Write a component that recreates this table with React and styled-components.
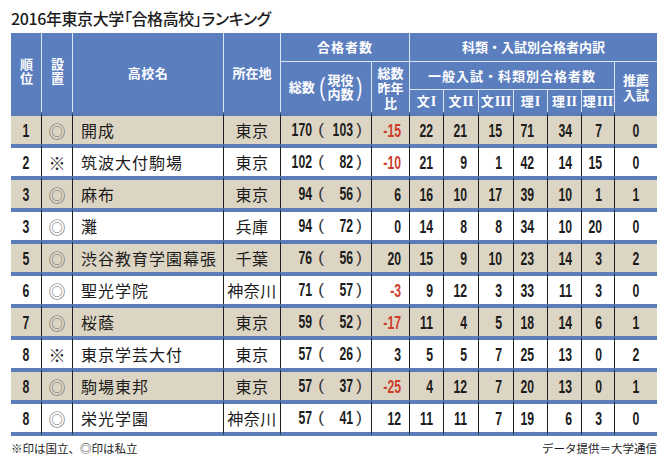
import React from 'react';
import styled, { createGlobalStyle } from 'styled-components';

const BLUE = '#5b7ebf';
const RULE = '#5a7cb9';
const SHADE = '#ddd5c3';
const HEAD_LINE = '#dde5f2';
const NUM = '"Liberation Sans", "DejaVu Sans", sans-serif';
const JP = '"Noto Sans CJK JP", "Noto Sans", sans-serif';

const GlobalStyle = createGlobalStyle`
  html, body {
    margin: 0;
    padding: 0;
    background: #fff;
  }
  body {
    font-family: ${JP};
    color: #1c1c1c;
  }
`;

const Page = styled.div`
  width: 670px;
  height: 469px;
  box-sizing: border-box;
  padding: 8px 13px 0 11px;
`;

const Title = styled.h1`
  margin: 0 0 5px;
  font-size: 16px;
  font-weight: 500;
  line-height: 20px;
  letter-spacing: -0.4px;
  font-feature-settings: "palt";
`;

const Table = styled.table`
  width: 646px;
  table-layout: fixed;
  border-collapse: separate;
  border-spacing: 0;
`;

const HeadRow = styled.tr`
  height: ${(p) => p.$h}px;
`;

const Th = styled.th`
  background: ${BLUE};
  color: #fff;
  font-size: 13px;
  font-weight: 700;
  line-height: 14px;
  padding: 0;
  text-align: center;
  vertical-align: middle;
  border-left: 1px solid ${HEAD_LINE};
  border-top: 1px solid ${HEAD_LINE};
  letter-spacing: ${(p) => p.$spacing || 0}px;
  tr:first-child > & {
    border-top: none;
  }
  tr:first-child > &:first-child {
    border-left: none;
  }
`;

const Vertical = styled.span`
  display: inline-block;
  writing-mode: vertical-rl;
  text-orientation: upright;
  letter-spacing: 1px;
  line-height: 14px;
`;

const Lines = styled.div`
  display: flex;
  flex-direction: column;
  align-items: center;
`;

const Line = styled.div`
  height: ${(p) => p.$h || 14}px;
  line-height: ${(p) => p.$h || 14}px;
  white-space: nowrap;
`;

const TotalHead = styled.div`
  display: flex;
  align-items: center;
  justify-content: center;
`;

const BigParen = styled.span`
  display: inline-block;
  margin: 0 1px 0 3px;
  font-family: "Liberation Sans", sans-serif;
  font-weight: 400;
  font-size: 26px;
  line-height: 28px;
  transform: scaleX(0.7);
  &:last-child {
    margin: 0 0 0 1px;
  }
`;

const Roman = styled.span`
  font-family: "Liberation Serif", serif;
  font-weight: 700;
  font-size: 14px;
  margin-left: 1px;
`;

const BodyRow = styled.tr`
  height: 32px;
  background: ${(p) => (p.$shaded ? SHADE : '#fff')};
  &:last-child {
    height: 36px;
  }
`;

const Td = styled.td`
  padding: 0 ${(p) => (p.$pad != null ? p.$pad : 10)}px 0 ${(p) => p.$padLeft || 0}px;
  border-top: 4px solid ${RULE};
  border-left: 1px solid #1e1e1e;
  text-align: ${(p) => p.$align || 'right'};
  vertical-align: middle;
  white-space: nowrap;
  overflow: hidden;
  &:first-child {
    border-left: none;
  }
  tr:last-child > & {
    border-bottom: 4px solid ${RULE};
  }
`;

// condensed bold digits: Liberation Sans squeezed horizontally
const Num = styled.span`
  display: inline-block;
  font-family: ${NUM};
  font-weight: 700;
  font-size: 18px;
  line-height: 22px;
  transform: scaleX(0.68);
  transform-origin: ${(p) => p.$origin || 'right'} center;
  color: ${(p) => (p.$neg ? '#cc3f2e' : '#1c1c1c')};
`;

const Mark = styled.span`
  font-size: 17px;
  color: ${(p) => (p.$gray ? '#707070' : '#2a2a2a')};
`;

const Name = styled.span`
  font-size: 16px;
  letter-spacing: 1px;
`;

const Pref = styled.span`
  font-size: 16px;
  letter-spacing: 0.5px;
`;

const TotalCell = styled.div`
  display: flex;
  align-items: center;
  width: 91px;
`;

const Slot = styled.span`
  display: flex;
  justify-content: flex-end;
  width: ${(p) => p.$w}px;
  flex: none;
`;

const Paren = styled.span`
  display: inline-block;
  width: ${(p) => p.$w}px;
  flex: none;
  text-align: center;
  font-family: "Liberation Sans", sans-serif;
  font-size: 17px;
  line-height: 22px;
  font-weight: 400;
  color: #333;
`;

const Footer = styled.div`
  width: 646px;
  display: flex;
  justify-content: space-between;
  margin-top: 5px;
  font-size: 11.5px;
  line-height: 14px;
  color: #1c1c1c;
`;

const widths = [30, 31, 151, 57, 91, 38, 34, 35, 35, 34, 34, 33, 43];

const rows = [
  [1, '◎', '開成', '東京', 170, 103, -15, [22, 21, 15, 71, 34, 7], 0],
  [2, '※', '筑波大付駒場', '東京', 102, 82, -10, [21, 9, 1, 42, 14, 15], 0],
  [3, '◎', '麻布', '東京', 94, 56, 6, [16, 10, 17, 39, 10, 1], 1],
  [3, '◎', '灘', '兵庫', 94, 72, 0, [14, 8, 8, 34, 10, 20], 0],
  [5, '◎', '渋谷教育学園幕張', '千葉', 76, 56, 20, [15, 9, 10, 23, 14, 3], 2],
  [6, '◎', '聖光学院', '神奈川', 71, 57, -3, [9, 12, 3, 33, 11, 3], 0],
  [7, '◎', '桜蔭', '東京', 59, 52, -17, [11, 4, 5, 18, 14, 6], 1],
  [8, '※', '東京学芸大付', '東京', 57, 26, 3, [5, 5, 7, 25, 13, 0], 2],
  [8, '◎', '駒場東邦', '東京', 57, 37, -25, [4, 12, 7, 20, 13, 0], 1],
  [8, '◎', '栄光学園', '神奈川', 57, 41, 12, [11, 11, 7, 19, 6, 3], 0],
];

const subjects = [
  ['文', 'I'],
  ['文', 'II'],
  ['文', 'III'],
  ['理', 'I'],
  ['理', 'II'],
  ['理', 'III'],
];

// 理I列だけ数字が少し左寄り
const subjectPad = [10, 11, 11, 13, 9, 12];

function Stack({ lines, h }) {
  return (
    <Lines>
      {lines.map((l, i) => (
        <Line key={i} $h={h}>
          {l}
        </Line>
      ))}
    </Lines>
  );
}

export default function App() {
  return (
    <Page>
      <GlobalStyle />
      <Title>2016年東京大学「合格高校」ランキング</Title>
      <Table>
        <colgroup>
          {widths.map((w, i) => (
            <col key={i} style={{ width: w }} />
          ))}
        </colgroup>
        <thead>
          <HeadRow $h={28}>
            <Th rowSpan={3}>
              <Vertical>順位</Vertical>
            </Th>
            <Th rowSpan={3}>
              <Vertical>設置</Vertical>
            </Th>
            <Th rowSpan={3} $spacing={0.5}>高校名</Th>
            <Th rowSpan={3}>所在地</Th>
            <Th colSpan={2} $spacing={1}>合格者数</Th>
            <Th colSpan={7}>科類・入試別合格者内訳</Th>
          </HeadRow>
          <HeadRow $h={28}>
            <Th rowSpan={2}>
              <TotalHead>
                <span>総数</span>
                <BigParen>(</BigParen>
                <Stack lines={['現役', '内数']} />
                <BigParen>)</BigParen>
              </TotalHead>
            </Th>
            <Th rowSpan={2}>
              <Stack lines={['総数', '昨年', '比']} h={15} />
            </Th>
            <Th colSpan={6} $spacing={1}>一般入試・科類別合格者数</Th>
            <Th rowSpan={2}>
              <Stack lines={['推薦', '入試']} h={15} />
            </Th>
          </HeadRow>
          <HeadRow $h={23}>
            {subjects.map(([k, r], i) => (
              <Th key={i}>
                {k}
                <Roman>{r}</Roman>
              </Th>
            ))}
          </HeadRow>
        </thead>
        <tbody>
          {rows.map(([rank, mark, name, pref, total, current, diff, subs, rec], i) => (
            <BodyRow key={i} $shaded={i % 2 === 0}>
              <Td $align="center" $pad={0}>
                <Num $origin="center">{rank}</Num>
              </Td>
              <Td $align="center" $pad={0}>
                <Mark $gray={mark === '◎'}>{mark}</Mark>
              </Td>
              <Td $align="left" $pad={0} $padLeft={8}>
                <Name>{name}</Name>
              </Td>
              <Td $align="center" $pad={0}>
                <Pref>{pref}</Pref>
              </Td>
              <Td $pad={0}>
                <TotalCell>
                  <Slot $w={31}>
                    <Num>{total}</Num>
                  </Slot>
                  <Paren $w={18}>(</Paren>
                  <Slot $w={23}>
                    <Num>{current}</Num>
                  </Slot>
                  <Paren $w={12}>)</Paren>
                </TotalCell>
              </Td>
              <Td $pad={8}>
                <Num $neg={diff < 0}>{diff}</Num>
              </Td>
              {subs.map((s, j) => (
                <Td key={j} $pad={subjectPad[j]}>
                  <Num>{s}</Num>
                </Td>
              ))}
              <Td $align="center" $pad={0}>
                <Num $origin="center">{rec}</Num>
              </Td>
            </BodyRow>
          ))}
        </tbody>
      </Table>
      <Footer>
        <span>※印は国立、◎印は私立</span>
        <span>データ提供＝大学通信</span>
      </Footer>
    </Page>
  );
}
